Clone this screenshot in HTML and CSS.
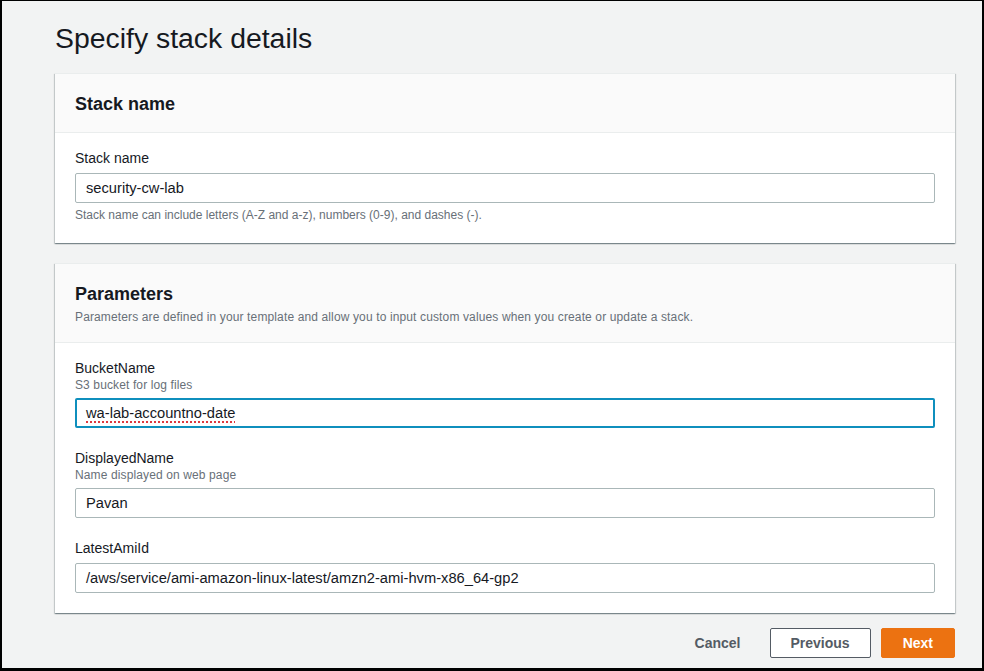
FILE: index.html
```html
<!DOCTYPE html>
<html lang="en">
<head>
<meta charset="utf-8">
<title>Specify stack details</title>
<link rel="stylesheet" href="styles.css">
</head>
<body>
<div class="frame">
  <h1 class="title">Specify stack details</h1>

  <section class="card">
    <div class="card-header">
      <h2 class="card-title">Stack name</h2>
    </div>
    <div class="card-body">
      <div class="field">
        <div class="label">Stack name</div>
        <div class="input">security-cw-lab</div>
        <div class="hint">Stack name can include letters (A-Z and a-z), numbers (0-9), and dashes (-).</div>
      </div>
    </div>
  </section>

  <section class="card card-params">
    <div class="card-header">
      <h2 class="card-title">Parameters</h2>
      <div class="card-desc">Parameters are defined in your template and allow you to input custom values when you create or update a stack.</div>
    </div>
    <div class="card-body">
      <div class="field">
        <div class="label">BucketName</div>
        <div class="desc">S3 bucket for log files</div>
        <div class="input focus"><span class="misspelled">wa-lab-accountno-date</span></div>
      </div>
      <div class="field">
        <div class="label">DisplayedName</div>
        <div class="desc">Name displayed on web page</div>
        <div class="input">Pavan</div>
      </div>
      <div class="field">
        <div class="label">LatestAmiId</div>
        <div class="input">/aws/service/ami-amazon-linux-latest/amzn2-ami-hvm-x86_64-gp2</div>
      </div>
    </div>
  </section>

  <div class="actions">
    <button class="btn btn-link">Cancel</button>
    <button class="btn btn-normal">Previous</button>
    <button class="btn btn-primary">Next</button>
  </div>
</div>
</body>
</html>
```

FILE: styles.css
```css
html, body {
  margin: 0;
  padding: 0;
}

body {
  font-family: "Liberation Sans", Arial, Helvetica, sans-serif;
  color: #16191f;
  background: #000;
}

.frame {
  box-sizing: border-box;
  width: 984px;
  height: 671px;
  overflow: hidden;
  border-style: solid;
  border-color: #000;
  border-width: 1px 2px 3px 2px;
  background: #f2f3f3;
  padding: 19px 27px 0 53px;
}

.title {
  margin: 0;
  font-size: 28.4px;
  line-height: 36px;
  font-weight: 400;
  color: #16191f;
}

.card {
  margin-top: 17px;
  background: #fff;
  box-shadow: 0 1px 1px 0 rgba(0, 28, 36, 0.3),
              1px 1px 1px 0 rgba(0, 28, 36, 0.15),
              -1px 1px 1px 0 rgba(0, 28, 36, 0.15);
  border-top: 1px solid #eaeded;
}

.card + .card {
  margin-top: 20px;
}

.card-header {
  background: #fafafa;
  border-bottom: 1px solid #eaeded;
  padding: 19px 20px 17px;
}

.card-title {
  margin: 0;
  font-size: 18px;
  line-height: 22px;
  font-weight: 700;
  color: #16191f;
}

.card-desc {
  margin-top: 4px;
  font-size: 12px;
  line-height: 16px;
  color: #687078;
  letter-spacing: 0.13px;
}

.card-body {
  padding: 16px 20px 20px;
  display: flex;
  flex-direction: column;
  gap: 21px;
}

.field {
  display: flex;
  flex-direction: column;
}

.label {
  font-size: 14px;
  line-height: 18px;
  color: #16191f;
}

.desc {
  font-size: 12px;
  line-height: 16px;
  color: #687078;
  letter-spacing: 0.12px;
}

.input {
  box-sizing: border-box;
  height: 30px;
  border: 1px solid #aab7b8;
  border-radius: 2px;
  padding: 0 10px;
  font-size: 14.7px;
  line-height: 28px;
  color: #16191f;
  background: #fff;
  white-space: nowrap;
}

.label + .input {
  margin-top: 6px;
}

.desc + .input {
  margin-top: 5px;
}

.input.focus {
  border: 2px solid #0f8fbd;
  padding: 0 9px;
  line-height: 26px;
}

.misspelled {
  text-decoration: underline dotted #e0393e;
  text-decoration-thickness: 2px;
  text-underline-offset: 3px;
}

.hint {
  margin-top: 4px;
  font-size: 12px;
  line-height: 16px;
  color: #687078;
}

.actions {
  display: flex;
  justify-content: flex-end;
  gap: 10px;
  margin-top: 15px;
}

.btn {
  box-sizing: border-box;
  height: 30px;
  padding: 0 20px;
  border: 1px solid transparent;
  border-radius: 2px;
  font-family: inherit;
  font-size: 14px;
  font-weight: 700;
  line-height: 28px;
  cursor: pointer;
}

.btn-link {
  background: transparent;
  color: #545b64;
  padding: 0 18px;
}

.btn-normal {
  background: #fff;
  border-color: #545b64;
  color: #545b64;
}

.btn-primary {
  background: #ec7211;
  border-color: #ec7211;
  color: #fff;
  padding: 0 21px;
}
```
